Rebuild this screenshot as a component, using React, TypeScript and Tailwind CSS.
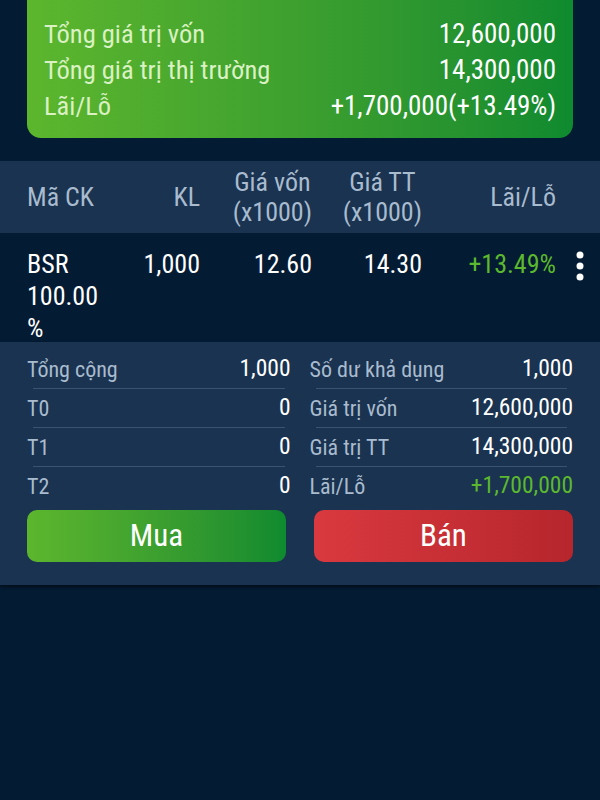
import React from "react";

const font = { fontFamily: '"Roboto Condensed", "Liberation Sans Narrow", Roboto, sans-serif' };

const summary = [
  { label: "Tổng giá trị vốn", value: "12,600,000" },
  { label: "Tổng giá trị thị trường", value: "14,300,000" },
  { label: "Lãi/Lỗ", value: "+1,700,000(+13.49%)" },
];

const left = [
  { label: "Tổng cộng", value: "1,000" },
  { label: "T0", value: "0" },
  { label: "T1", value: "0" },
  { label: "T2", value: "0" },
];

const right = [
  { label: "Số dư khả dụng", value: "1,000" },
  { label: "Giá trị vốn", value: "12,600,000" },
  { label: "Giá trị TT", value: "14,300,000" },
  { label: "Lãi/Lỗ", value: "+1,700,000", green: true },
];

function Kebab() {
  return (
    <svg width="8" height="30" viewBox="0 0 8 30" className="fill-white">
      <circle cx="4" cy="4" r="3.5" />
      <circle cx="4" cy="15" r="3.5" />
      <circle cx="4" cy="26" r="3.5" />
    </svg>
  );
}

function DetailRow({ label, value, green, last }: { label: string; value: string; green?: boolean; last?: boolean }) {
  return (
    <div className="flex flex-col">
      <div className="flex h-[38px] items-center justify-between">
        <span className="text-[22px] text-[#a9bbce]">{label}</span>
        <span className={`text-[23.5px] ${green ? "text-[#5cb82e]" : "text-white"}`}>{value}</span>
      </div>
      {!last && <div className="mx-[6px] h-px bg-[#3a536f]" />}
    </div>
  );
}

export default function App() {
  return (
    <div className="min-h-[800px] w-[600px] bg-[#031b33]" style={font}>
      <div className="px-[27px]">
        <div className="rounded-b-[14px] bg-gradient-to-r from-[#5cb62d] to-[#0e8a2f] px-[17px] pb-[14px] pt-[16px]">
          {summary.map((s) => (
            <div key={s.label} className="flex h-[36px] items-center justify-between">
              <span className="text-[26.5px] text-[#d9f1c3]">{s.label}</span>
              <span className="text-[27px] text-white">{s.value}</span>
            </div>
          ))}
        </div>
      </div>

      <div className="mt-[23px] grid h-[72px] grid-cols-[93px_80px_112px_110px_134px] items-center bg-[#1a3350] pl-[27px] text-[26px] leading-[30px] text-[#a9bbce]">
        <div>Mã CK</div>
        <div className="text-right">KL</div>
        <div className="ml-auto w-fit text-center">
          <div>Giá vốn</div>
          <div>(x1000)</div>
        </div>
        <div className="ml-auto w-fit text-center">
          <div>Giá TT</div>
          <div>(x1000)</div>
        </div>
        <div className="text-right">Lãi/Lỗ</div>
      </div>

      <div className="flex h-[109px] items-start pl-[27px] pt-[15px] text-[26px] leading-[32px] text-white">
        <div className="grid grid-cols-[93px_80px_112px_110px_134px]">
          <div>
            BSR
            <br />
            100.00
            <br />%
          </div>
          <div className="text-right">1,000</div>
          <div className="text-right">12.60</div>
          <div className="text-right">14.30</div>
          <div className="text-right text-[#5cb82e]">+13.49%</div>
        </div>
        <div className="ml-[20px] pt-[3px]">
          <Kebab />
        </div>
      </div>

      <div className="bg-[#1a3350] px-[27px] pb-[23px] pt-[8px] shadow-[0_2px_3px_rgba(0,0,0,0.5)]">
        <div className="grid grid-cols-2 gap-x-[19px]">
          <div>
            {left.map((r, i) => (
              <DetailRow key={r.label} {...r} last={i === left.length - 1} />
            ))}
          </div>
          <div>
            {right.map((r, i) => (
              <DetailRow key={r.label} {...r} last={i === right.length - 1} />
            ))}
          </div>
        </div>
        <div className="mt-[5px] grid grid-cols-2 gap-x-[28px]">
          <button className="h-[52px] rounded-[10px] bg-gradient-to-r from-[#5cb62d] to-[#0e8a2f] text-[31px] text-white">
            Mua
          </button>
          <button className="h-[52px] rounded-[10px] bg-gradient-to-r from-[#d9393f] to-[#b6262c] text-[31px] text-white">
            Bán
          </button>
        </div>
      </div>
    </div>
  );
}
